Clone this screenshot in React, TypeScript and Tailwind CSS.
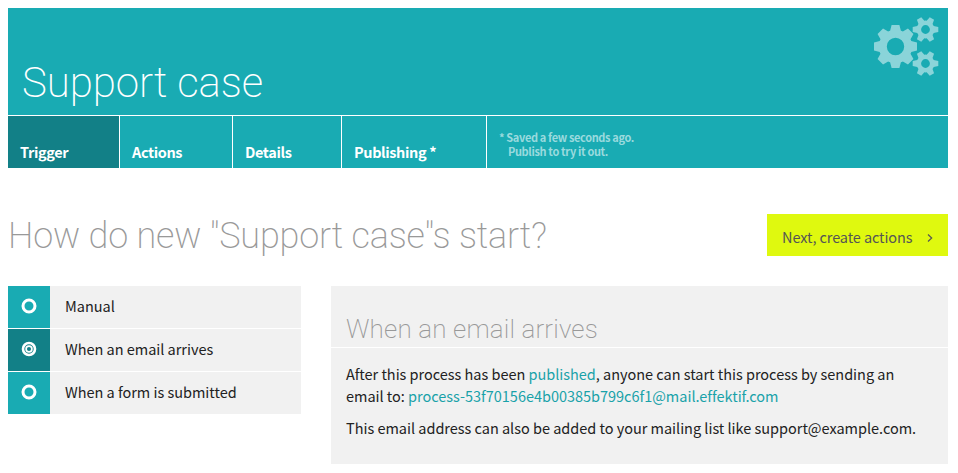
import React from 'react';

const SANS = "font-['Noto_Sans_CJK_JP','Noto_Sans',sans-serif]";
const DISPLAY = "font-['Roboto_Slab','Roboto',sans-serif]";

type GearProps = { cx: number; cy: number; outer: number; body: number; hole: number; teeth: number; base: number; tip: number };

/* Builds a toothed ring; base and tip are half widths of a tooth in pixels. */
function gearPath({ cx, cy, outer, body, hole, teeth, base, tip }: GearProps) {
  let d = '';
  for (let i = 0; i < teeth; i++) {
    const a = (i * 2 * Math.PI) / teeth;
    const at = (r: number, w: number) => {
      const x = cx + r * Math.cos(a) - w * Math.sin(a);
      const y = cy + r * Math.sin(a) + w * Math.cos(a);
      return `${x.toFixed(2)} ${y.toFixed(2)}`;
    };
    d += `${i === 0 ? 'M' : `A${body} ${body} 0 0 1 `}${at(body, -base)}L${at(outer, -tip)}L${at(outer, tip)}L${at(body, base)}`;
  }
  return `${d}ZM${cx + hole} ${cy}A${hole} ${hole} 0 1 0 ${cx - hole} ${cy}A${hole} ${hole} 0 1 0 ${cx + hole} ${cy}Z`;
}

function Gears() {
  return (
    <svg width="66" height="62" viewBox="0 0 66 62" className="text-[#8ad4d9]" fill="currentColor" fillRule="evenodd" aria-hidden="true">
      <path d={gearPath({ cx: 22.5, cy: 30.5, outer: 21.5, body: 15.8, hole: 8.7, teeth: 8, base: 5.4, tip: 3.9 })} />
      <path d={gearPath({ cx: 52.5, cy: 13.5, outer: 12.8, body: 8.2, hole: 4.4, teeth: 6, base: 3.4, tip: 2.5 })} />
      <path d={gearPath({ cx: 52.5, cy: 47.5, outer: 12.8, body: 8.2, hole: 4.4, teeth: 6, base: 3.4, tip: 2.5 })} />
    </svg>
  );
}

function Tab({ label, width, active }: { label: string; width: string; active?: boolean }) {
  return (
    <a className={`flex items-end border-r border-white pl-3 pb-[6px] text-[14.5px] leading-[20px] font-bold tracking-[-0.38px] whitespace-nowrap ${width} ${active ? 'bg-[#128087]' : ''}`}>
      {label}
    </a>
  );
}

function Option({ label, active }: { label: string; active?: boolean }) {
  return (
    <li className="flex h-[42px]">
      <span className={`flex w-[42px] items-center justify-center ${active ? 'bg-[#128087]' : 'bg-[#19abb3]'}`}>
        <svg width="16" height="16" viewBox="0 0 16 16" fill="none" stroke="white" className="-mt-0.5">
          <circle cx="8" cy="8" r="6" strokeWidth={active ? 2.6 : 3} />
          {active && <circle cx="8" cy="8" r="2.9" strokeWidth="1.7" />}
        </svg>
      </span>
      <span className="flex-1 bg-[#f1f1f1] pl-[15px] leading-[40px]">{label}</span>
    </li>
  );
}

export default function App() {
  return (
    <div className={`w-[958px] bg-white p-2 pr-[10px] text-[14.5px] tracking-[-0.02px] text-[#222] ${SANS}`}>
      <header className="bg-[#19abb3] text-white">
        <div className="flex h-[108px] justify-between border-b border-white pt-2 pr-[9px] pl-[14px]">
          <h1 className={`mt-[43px] text-[42px] leading-[48px] font-extralight tracking-[-0.1px] whitespace-nowrap ${DISPLAY}`}>Support case</h1>
          <Gears />
        </div>
        <nav className="flex h-[52px]">
          <Tab label="Trigger" width="w-[112px]" active />
          <Tab label="Actions" width="w-[113px]" />
          <Tab label="Details" width="w-[109px]" />
          <Tab label="Publishing *" width="w-[145px]" />
          <div className="flex flex-col pt-[14px] pl-3 text-[11px] leading-[14px] font-bold tracking-[-0.36px] text-[#9adade]">
            <span>* Saved a few seconds ago.</span>
            <span className="pl-[9px]">Publish to try it out.</span>
          </div>
        </nav>
      </header>

      <div className="mt-[46px] flex h-[42px] items-center justify-between">
        <h2 className={`mt-[2px] text-[36px] leading-[42px] font-extralight tracking-[-0.17px] whitespace-nowrap text-[#999] ${DISPLAY}`}>How do new "Support case"s start?</h2>
        <button className="flex h-[42px] w-[181px] items-center justify-between bg-[#dff90f] pr-[15px] pl-[15px] text-[#555]">
          <span className="mt-[3px] tracking-[-0.1px] whitespace-nowrap">Next, create actions</span>
          <svg width="6" height="10" viewBox="0 0 6 10" fill="none" stroke="currentColor" strokeWidth="1.2" className="mt-[6px]">
            <path d="M1 1.5 4.7 5 1 8.5" />
          </svg>
        </button>
      </div>

      <main className="mt-[30px] flex items-start gap-[30px]">
        <ul className="flex w-[293px] flex-col gap-px">
          <Option label="Manual" />
          <Option label="When an email arrives" active />
          <Option label="When a form is submitted" />
        </ul>
        <section className="h-[178px] w-[617px] bg-[#f1f1f1]">
          <h3 className={`h-[62px] border-b border-white pt-[27px] pl-[15px] text-[26px] leading-[32px] font-extralight tracking-[0.15px] whitespace-nowrap text-[#999] ${DISPLAY}`}>When an email arrives</h3>
          <div className="flex flex-col gap-[10px] pt-[15px] pl-[15px] leading-[22px] whitespace-nowrap">
            <p>
              After this process has been <a className="text-[#19a2a9]">published</a>, anyone can start this process by sending an
              <br />
              email to: <a className="text-[#19a2a9]">process-53f70156e4b00385b799c6f1@mail.effektif.com</a>
            </p>
            <p>This email address can also be added to your mailing list like support@example.com.</p>
          </div>
        </section>
      </main>
    </div>
  );
}
